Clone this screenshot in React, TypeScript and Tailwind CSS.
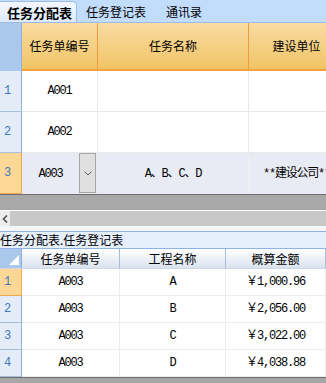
import React from "react";

const cjk = "font-['Noto_Sans_CJK_SC',sans-serif]";
const mono = "font-['Liberation_Mono','Noto_Sans_CJK_SC',monospace] text-[12px] tracking-[-1.2px]";

function RowNum({ n, selected, h }: { n: number; selected?: boolean; h: string }) {
  return (
    <div
      className={`${h} w-[22px] shrink-0 flex items-center pl-[4px] border-r border-b ${mono} ${
        selected
          ? "bg-[#fdd795] border-r-[#f0a850] border-b-[#f0a850] text-[#3a78c0]"
          : "bg-[#e4ecf8] border-r-[#93b2d8] border-b-[#a9c0dc] text-[#3a78c0]"
      }`}
    >
      {n}
    </div>
  );
}

export default function App() {
  const topRows = [
    { id: "A001", name: "", unit: "" },
    { id: "A002", name: "", unit: "" },
  ];
  const bottomRows = [
    { id: "A003", p: "A", amt: "￥1,000.96" },
    { id: "A003", p: "B", amt: "￥2,056.00" },
    { id: "A003", p: "C", amt: "￥3,022.00" },
    { id: "A003", p: "D", amt: "￥4,038.88" },
  ];
  return (
    <div className={`w-[326px] h-[383px] overflow-hidden bg-[#a8a8a8] flex flex-col ${cjk} text-black`}>
      {/* Tab bar */}
      <div className="h-[23px] shrink-0 bg-[#c2dcfc] border-b border-[#9cbce6] flex items-end">
        <div className="h-[21px] w-[77px] bg-gradient-to-b from-[#f4f8fe] to-[#dce8fa] border-t border-r border-[#9cbce6] rounded-tr-[5px] flex items-center pl-[7px] text-[13px] font-bold leading-none">
          任务分配表
        </div>
        <div className="h-[21px] flex items-center pl-[9px] text-[12px] leading-none">任务登记表</div>
        <div className="h-[21px] flex items-center pl-[20px] text-[12px] leading-none">通讯录</div>
      </div>

      {/* Top grid header */}
      <div className="h-[48px] shrink-0 flex bg-white">
        <div className="w-[22px] shrink-0 bg-[#a9c8ec] border-r border-[#8fb0dc]" />
        <div className="flex flex-1 overflow-hidden border-b-2 border-[#f5a23c] bg-gradient-to-b from-[#f9dca2] to-[#f1c464]">
          <div className="w-[76px] shrink-0 border-r border-[#f39a3a] flex items-center justify-center text-[12px]">任务单编号</div>
          <div className="w-[151px] shrink-0 border-r border-[#f39a3a] flex items-center justify-center text-[12px]">任务名称</div>
          <div className="w-[95px] shrink-0 flex items-center justify-center text-[12px]">建设单位</div>
        </div>
      </div>

      {/* Top rows */}
      {topRows.map((r, i) => (
        <div key={i} className="h-[41px] shrink-0 flex bg-white">
          <RowNum n={i + 1} h="h-[41px]" />
          <div className="w-[76px] shrink-0 border-r border-b border-[#e8e8e8] flex items-center justify-center">
            <span className={mono}>{r.id}</span>
          </div>
          <div className="w-[151px] shrink-0 border-r border-b border-[#e8e8e8]" />
          <div className="w-[95px] shrink-0 border-b border-[#e8e8e8]" />
        </div>
      ))}
      <div className="h-[41px] shrink-0 flex bg-[#e8ebf4] overflow-hidden">
        <RowNum n={3} selected h="h-[41px]" />
        <div className="w-[76px] shrink-0 border-r border-[#e8e8e8] flex items-stretch">
          <div className="flex-1 flex items-center justify-center">
            <span className={mono}>A003</span>
          </div>
          <div className="w-[17px] mr-[1px] mb-[1px] bg-[#e0e0e0] border border-[#a6a6a6] flex items-center justify-center">
            <svg width="8" height="5" viewBox="0 0 8 5">
              <path d="M0.5 0.5 L4 4 L7.5 0.5" fill="none" stroke="#606060" strokeWidth="1" />
            </svg>
          </div>
        </div>
        <div className="w-[151px] shrink-0 border-r border-[#eeeeee] flex items-center justify-center">
          <span className={mono}>A、B、C、D</span>
        </div>
        <div className="w-[95px] shrink-0 flex items-center justify-center whitespace-nowrap">
          <span className={mono}>**建设公司**</span>
        </div>
      </div>

      {/* Gray gap */}
      <div className="h-[16px] shrink-0 border-t border-[#6e6e6e] bg-[#a8a8a8]" />
      {/* Scrollbar */}
      <div className="h-[16px] shrink-0 border-t border-white flex bg-[#c8c8c8]">
        <div className="w-[10px] bg-[#ececec] flex items-center justify-center">
          <svg width="6" height="8" viewBox="0 0 6 8">
            <path d="M5 0.5 L1.5 4 L5 7.5" fill="none" stroke="#505050" strokeWidth="1.6" />
          </svg>
        </div>
        <div className="flex-1" />
      </div>
      <div className="h-[5px] shrink-0 bg-[#f4f6f9]" />

      {/* Caption */}
      <div className="h-[18px] shrink-0 border-y border-[#8fb3e6] bg-[#e6effc] flex items-center text-[12px] leading-none whitespace-nowrap">
        任务分配表.任务登记表
      </div>

      {/* Bottom header */}
      <div className="h-[20px] shrink-0 flex bg-gradient-to-b from-[#ffffff] to-[#dae2ee] border-b border-[#cfd8e4]">
        <div className="w-[22px] shrink-0 bg-[#a9c8ec] border-r border-[#8fb0dc] relative">
          <svg className="absolute right-[2px] bottom-[3px]" width="10" height="10" viewBox="0 0 10 10">
            <path d="M10 0 L10 10 L0 10 Z" fill="#ffffff" />
          </svg>
        </div>
        <div className="w-[98px] shrink-0 border-r border-[#a6bcd8] flex items-center justify-center text-[12px]">任务单编号</div>
        <div className="w-[106px] shrink-0 border-r border-[#a6bcd8] flex items-center justify-center text-[12px]">工程名称</div>
        <div className="w-[100px] shrink-0 border-r border-[#a6bcd8] flex items-center justify-center text-[12px]">概算金额</div>
      </div>

      {/* Bottom rows */}
      {bottomRows.map((r, i) => (
        <div key={i} className="h-[27px] shrink-0 flex bg-white">
          <RowNum n={i + 1} selected={i === 0} h="h-[27px]" />
          <div className="w-[98px] shrink-0 border-r border-b border-[#ececec] flex items-center justify-center">
            <span className={mono}>{r.id}</span>
          </div>
          <div className="w-[106px] shrink-0 border-r border-b border-[#ececec] flex items-center justify-center">
            <span className={mono}>{r.p}</span>
          </div>
          <div className="w-[100px] shrink-0 border-r border-b border-[#ececec] flex items-center justify-center">
            <span className={mono}>{r.amt}</span>
          </div>
          <div className="flex-1 border-b border-[#ececec]" />
        </div>
      ))}
      <div className="flex-1 border-t border-[#6e6e6e] bg-[#a8a8a8]" />
    </div>
  );
}
